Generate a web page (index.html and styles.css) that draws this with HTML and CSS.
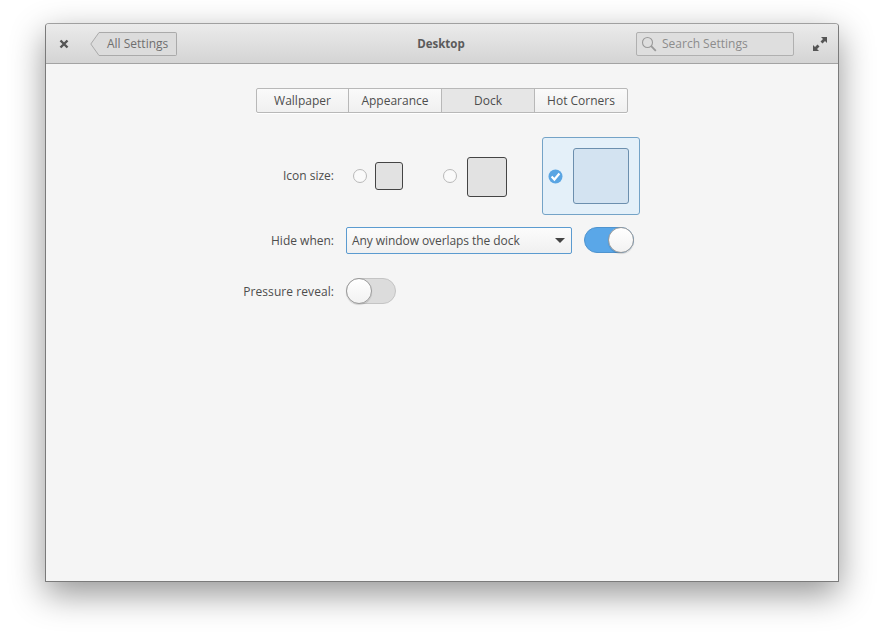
FILE: index.html
```html
<!DOCTYPE html>
<html lang="en">
<head>
  <meta charset="UTF-8" />
  <title>Desktop</title>
  <link rel="stylesheet" href="styles.css">
</head>
<body>
  <div class="window">
    <header class="titlebar">
      <div class="bar-left">
        <svg class="close-icon" width="10" height="10" viewBox="0 0 10 10"><path d="M1.5 1.5l7 7M8.5 1.5l-7 7" stroke="#555" stroke-width="2.4" fill="none"/></svg>
        <button class="back-btn">
          <svg class="back-tip" width="11" height="24" viewBox="0 0 11 24"><path d="M11 .5H9L.8 12 9 23.5h2" fill="#dcdcdc" stroke="#aaa"/></svg>
          <span class="back-label">All Settings</span>
        </button>
      </div>
      <div class="title">Desktop</div>
      <div class="bar-right">
        <div class="search">
          <svg width="16" height="16" viewBox="0 0 16 16"><circle cx="6.5" cy="6.5" r="5" fill="none" stroke="#999" stroke-width="1.1"/><path d="M10.2 10.2l4.6 4.6" stroke="#999" stroke-width="1.8"/></svg>
          <span>Search Settings</span>
        </div>
        <svg class="max-icon" width="14" height="14" viewBox="0 0 14 14"><path d="M8 0h6v6l-2-2-2.5 2.5-2-2L10 2zM6 14H0V8l2 2 2.5-2.5 2 2L4 12z" fill="#555"/></svg>
      </div>
    </header>

    <main class="content">
      <nav class="tabs">
        <div class="tab">Wallpaper</div>
        <div class="tab">Appearance</div>
        <div class="tab active">Dock</div>
        <div class="tab">Hot Corners</div>
      </nav>

      <div class="form">
        <label class="form-label icon-label">Icon size:</label>
        <div class="sizes">
          <div class="size size-small"><span class="radio"></span><span class="swatch"></span></div>
          <div class="size size-medium"><span class="radio"></span><span class="swatch"></span></div>
          <div class="size size-large selected">
            <svg class="radio-on" width="15" height="15" viewBox="0 0 15 15"><circle cx="7.5" cy="7.5" r="7" fill="#5aa5e3"/><path d="M3.6 7.6l2.8 2.9 5-6" fill="none" stroke="#fff" stroke-width="2.2"/></svg>
            <span class="swatch"></span>
          </div>
        </div>

        <label class="form-label">Hide when:</label>
        <div class="hide-row">
          <div class="combo">
            <span class="combo-text">Any window overlaps the dock</span>
            <span class="arrow"></span>
          </div>
          <div class="switch on"><span class="knob"></span></div>
        </div>

        <label class="form-label spaced wide">Pressure reveal:</label>
        <div class="switch spaced"><span class="knob"></span></div>
      </div>
    </main>
  </div>
</body>
</html>
```
FILE: styles.css
```css
html, body {
  margin: 0;
  padding: 0;
  height: 100%;
  overflow: hidden;
  background: #fff;
  font-family: 'Open Sans', sans-serif;
  font-size: 12px;
  color: #4d4d4d;
}
body {
  padding: 23px 0 0 45px;
  box-sizing: border-box;
}
.window {
  width: 794px;
  height: 559px;
  box-sizing: border-box;
  border: 1px solid #7a7a7a;
  border-top-color: #a0a0a0;
  border-radius: 4px 4px 1px 1px;
  background: #f5f5f5;
  box-shadow: 0 12px 34px rgba(0, 0, 0, 0.42);
}
.titlebar {
  height: 40px;
  box-sizing: border-box;
  display: grid;
  grid-template-columns: 1fr auto 1fr;
  align-items: center;
  padding: 0 11px 0 13px;
  background: linear-gradient(#ebebeb, #d4d4d4);
  border-bottom: 1px solid #a3a3a3;
  border-radius: 3px 3px 0 0;
}
.bar-left,
.bar-right {
  display: flex;
  align-items: center;
}
.bar-right {
  justify-content: flex-end;
}
.close-icon {
  flex: none;
}
.back-btn {
  display: flex;
  height: 24px;
  margin-left: 21px;
  padding: 0;
  border: none;
  background: none;
  font: inherit;
  color: #6f6f6f;
}
.back-tip {
  display: block;
  margin-right: -1px;
}
.back-label {
  display: block;
  line-height: 22px;
  padding: 0 8px 0 7px;
  background: #dcdcdc;
  border: 1px solid #aaa;
  border-left: none;
  border-radius: 0 2px 2px 0;
}
.title {
  margin-right: 4px;
  font-size: 11.5px;
  font-weight: 700;
  color: #5b5b5b;
}
.search {
  width: 158px;
  height: 24px;
  box-sizing: border-box;
  display: flex;
  align-items: center;
  gap: 5px;
  padding-left: 4px;
  border: 1px solid #b0b0b0;
  border-radius: 2px;
  background: #dedede;
  color: #8c8c8c;
}
.max-icon {
  margin-left: 19px;
  flex: none;
}
.content {
  display: flex;
  flex-direction: column;
  align-items: center;
  padding-top: 24px;
}
.tabs {
  display: flex;
  width: 372px;
  height: 25px;
  box-sizing: border-box;
  border: 1px solid #b8b8b8;
  border-radius: 2px;
  background: linear-gradient(#fafafa, #f0f0f0);
  box-shadow: 0 1px 0 #fff;
}
.tab {
  flex: 0 0 93px;
  box-sizing: border-box;
  text-align: center;
  line-height: 23px;
  border-left: 1px solid #b8b8b8;
}
.tab:first-child {
  flex-basis: 91px;
  border-left: none;
}
.tab.active {
  background: #e6e6e6;
}
.form {
  align-self: flex-start;
  margin: 24px 0 0 196px;
  display: grid;
  grid-template-columns: 92px auto;
  justify-content: start;
  align-items: center;
  column-gap: 12px;
  row-gap: 12px;
}
.form-label {
  text-align: right;
  justify-self: end;
}
.icon-label {
  margin-bottom: 2px;
}
.spaced {
  margin-top: 12px;
}
.wide {
  letter-spacing: 0.07px;
}
.sizes {
  display: flex;
  align-items: center;
  height: 78px;
}
.size {
  display: flex;
  align-items: center;
  box-sizing: border-box;
}
.size-small {
  padding-left: 7px;
  gap: 8px;
  width: 97px;
}
.size-medium {
  gap: 10px;
  width: 99px;
}
.radio {
  width: 14px;
  height: 14px;
  box-sizing: border-box;
  border: 1px solid #b9b9b9;
  border-radius: 50%;
  background: #fafafa;
}
.swatch {
  display: block;
  box-sizing: border-box;
  border: 1px solid #444;
  border-radius: 3px;
  background: #e2e2e2;
}
.size-small .swatch {
  width: 28px;
  height: 28px;
}
.size-medium .swatch {
  width: 40px;
  height: 40px;
  margin-top: 2px;
}
.size-large {
  width: 98px;
  height: 78px;
  padding-left: 5px;
  gap: 10px;
  border: 1px solid #74a3c7;
  border-radius: 3px;
  background: #e4f0f9;
}
.size-large .swatch {
  width: 56px;
  height: 56px;
  border-color: #6c8fae;
  background: #d3e3f1;
}
.radio-on {
  flex: none;
}
.hide-row {
  display: flex;
  align-items: flex-start;
  gap: 12px;
}
.combo {
  width: 226px;
  height: 27px;
  box-sizing: border-box;
  display: flex;
  align-items: center;
  justify-content: space-between;
  padding: 0 6px 0 5px;
  border: 1px solid #5b9bd0;
  border-radius: 2px;
  background: linear-gradient(#fcfcfc, #f0f0f0);
}
.combo-text {
  letter-spacing: -0.07px;
}
.arrow {
  width: 0;
  height: 0;
  border-left: 5px solid transparent;
  border-right: 5px solid transparent;
  border-top: 5px solid #444;
}
.switch {
  width: 50px;
  height: 26px;
  box-sizing: border-box;
  display: flex;
  border: 1px solid #c4c4c4;
  border-radius: 13px;
  background: #dcdcdc;
}
.switch.on {
  justify-content: flex-end;
  border-color: #4f94cf;
  background: #5aa7e8;
}
.knob {
  width: 26px;
  height: 26px;
  margin: -1px;
  box-sizing: border-box;
  border: 1px solid #9a9a9a;
  border-radius: 50%;
  background: linear-gradient(#fff, #f2f2f2);
  box-shadow: 0 1px 1px rgba(0, 0, 0, 0.15);
}
```
